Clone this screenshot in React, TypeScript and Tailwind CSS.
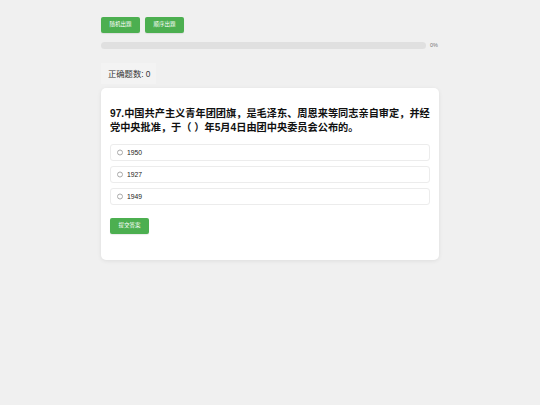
import { useState } from "react"

const options = ["1950", "1927", "1949"]

const GreenButton = ({ label }: { label: string }) => (
  <button className="flex h-[16px] w-[39px] items-center justify-center rounded-[2px] bg-[#4caf50] text-[5.5px] leading-none text-white shadow-[0_1px_1px_rgba(0,0,0,0.08)]">
    {label}
  </button>
)

const App = () => {
  const [picked, setPicked] = useState<string | null>(null)
  return (
    <div
      className="min-h-screen bg-[#f0f0f0]"
      style={{ fontFamily: '"Liberation Sans", "Noto Sans CJK SC", sans-serif' }}
    >
      <div className="mx-auto w-[338px] pt-[17px]">
        <div className="flex gap-[5px]">
          <GreenButton label="随机出题" />
          <GreenButton label="顺序出题" />
        </div>

        <div className="mt-[9px] flex items-center gap-[4px]">
          <div className="h-[7px] flex-1 rounded-full bg-[#e0e0e0]" />
          <span className="w-[9px] text-[5.5px] leading-none text-[#777]">0%</span>
        </div>

        <div className="mt-[14px] flex h-[21px] w-[55px] items-center whitespace-nowrap bg-[#f3f3f3] pl-[7px] text-[8.3px] text-[#333]">
          <span className="translate-y-[1px]">正确题数: 0</span>
        </div>

        <div className="mt-[4px] rounded-[5px] bg-white px-[9px] pb-[26px] pt-[19px] shadow-[0_1px_4px_rgba(0,0,0,0.08)]">
          <h2 className="-mr-[3px] text-[10.2px] font-bold leading-[14px] text-[#111]">
            97.中国共产主义青年团团旗，是毛泽东、周恩来等同志亲自审定，并经党中央批准，于（ ）年5月4日由团中央委员会公布的。
          </h2>

          <div className="mt-[9px] flex flex-col gap-[5px]">
            {options.map((o) => (
              <div
                key={o}
                onClick={() => setPicked(o)}
                className="flex h-[17px] items-center gap-[4px] rounded-[3px] border border-[#ececec] pl-[6px]"
              >
                <span
                  className={
                    picked === o
                      ? "block h-[6px] w-[6px] shrink-0 -translate-y-[0.5px] rounded-full border border-[#4caf50] bg-[#4caf50]"
                      : "block h-[6px] w-[6px] shrink-0 -translate-y-[0.5px] rounded-full border border-[#aaa]"
                  }
                />
                <span className="block translate-y-[1px] text-[6.8px] font-medium leading-none text-[#222]">{o}</span>
              </div>
            ))}
          </div>

          <div className="mt-[13px]">
            <GreenButton label="提交答案" />
          </div>
        </div>
      </div>
    </div>
  )
}

export default App
